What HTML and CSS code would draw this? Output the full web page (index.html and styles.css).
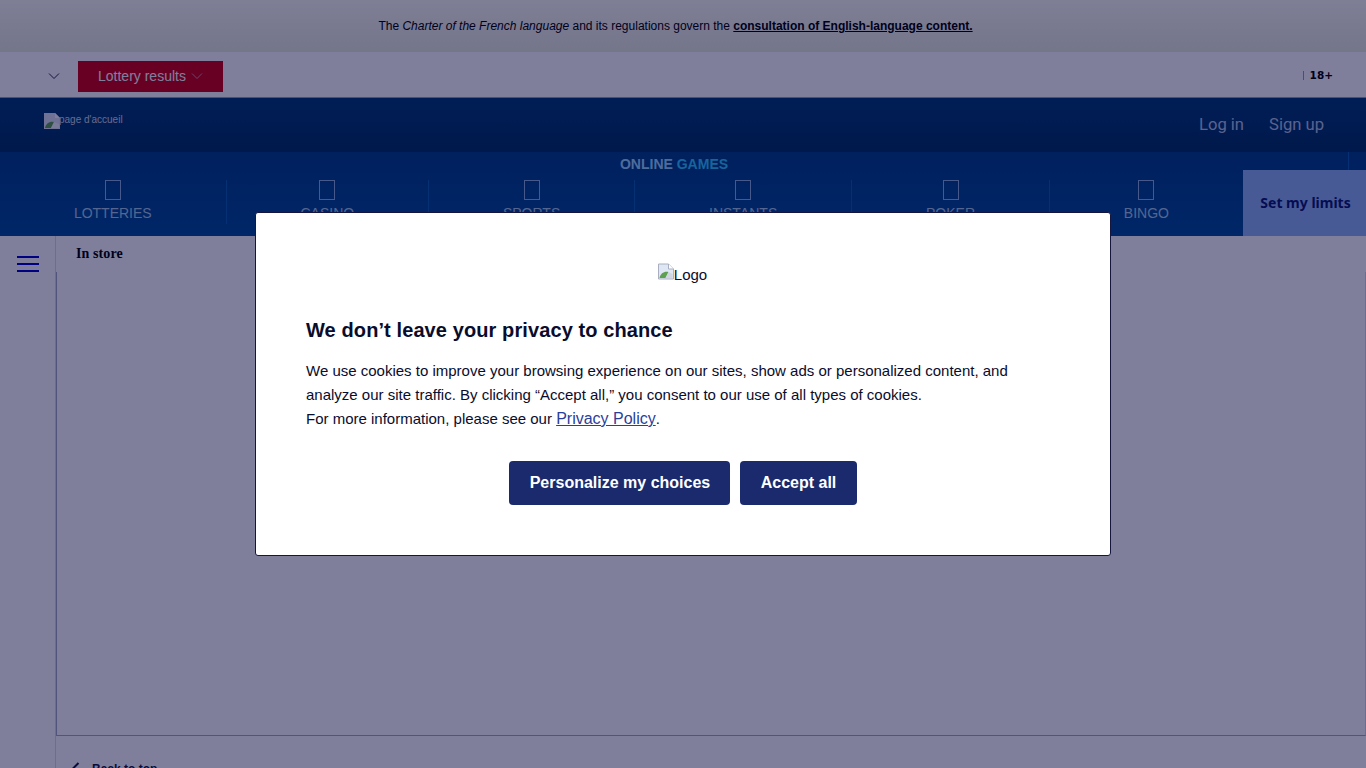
FILE: index.html
```html
<!DOCTYPE html>
<html lang="en">
<head>
    <meta charset="UTF-8">
    <meta name="viewport" content="width=device-width, initial-scale=1.0">
    <title>Lottery results</title>
    <link rel="stylesheet" href="styles.css">
</head>
<body>
    <div class="notice">
        <p>The <em>Charter of the French language</em> and its regulations govern the <a href="#">consultation of English-language content.</a></p>
    </div>

    <div class="utility">
        <svg class="chevron" width="12" height="8" viewBox="0 0 12 8"><path d="M1 1.5l5 5 5-5" fill="none" stroke="#24263f" stroke-width="1"/></svg>
        <a class="results-button" href="#">Lottery results
            <svg width="12" height="8" viewBox="0 0 12 8"><path d="M1 1.5l5 5 5-5" fill="none" stroke="#d68aa0" stroke-width="1"/></svg>
        </a>
        <div class="age"><span class="age-line"></span>18+</div>
    </div>

    <header class="topbar">
        <a class="home-link" href="#">
            <svg class="broken-image" width="16" height="16" viewBox="0 0 16 16"><path d="M0 0h11l5 5v11H0z" fill="#dfe4f2"/><path d="M11 0v5h5z" fill="#fff"/><path d="M1 15c1-5 5-7 9-6l-3 6z" fill="#5da04f"/><path d="M7 15l3-6 5 2v4z" fill="#f2f4f8"/></svg>
            <span>page d'accueil</span>
        </a>
        <nav class="account">
            <a href="#">Log in</a>
            <a href="#">Sign up</a>
        </nav>
    </header>

    <section class="games">
        <div class="games-title">ONLINE <span>GAMES</span></div>
        <span class="games-rule"></span>
        <div class="games-row">
            <a class="game" href="#"><i class="tofu"></i>LOTTERIES</a>
            <a class="game" href="#"><i class="tofu"></i>CASINO</a>
            <a class="game" href="#"><i class="tofu"></i>SPORTS</a>
            <a class="game" href="#"><i class="tofu"></i>INSTANTS</a>
            <a class="game" href="#"><i class="tofu"></i>POKER</a>
            <a class="game last" href="#"><i class="tofu"></i>BINGO</a>
            <a class="limits" href="#">Set my limits</a>
        </div>
    </section>

    <div class="page">
        <aside class="sidebar">
            <div class="burger"><span></span><span></span><span></span></div>
        </aside>
        <main class="content">
            <div class="tab">In store</div>
            <div class="frame"></div>
            <a class="back" href="#">
                <svg width="9" height="14" viewBox="0 0 9 14"><path d="M7.5 1L1.5 7l6 6" fill="none" stroke="#14163f" stroke-width="2"/></svg>
                Back to top
            </a>
        </main>
    </div>

    <div class="overlay">
        <div class="modal">
            <div class="modal-logo">
                <svg width="16" height="17" viewBox="0 0 16 16"><path d="M.5.5h10l5 5v10H.5z" fill="#dfe6f4" stroke="#a9afc0"/><path d="M10.5.5v5h5" fill="#fff" stroke="#a9afc0"/><path d="M1.5 14.5c1-5 5-7 9-6l-3 6z" fill="#5da04f"/><path d="M7.5 14.5l3-6 4 2v4z" fill="#cfd6e2"/></svg>
                <span>Logo</span>
            </div>
            <h2>We don’t leave your privacy to chance</h2>
            <p>We use cookies to improve your browsing experience on our sites, show ads or personalized content, and analyze our site traffic. By clicking “Accept all,” you consent to our use of all types of cookies.<br>For more information, please see our <a href="#">Privacy Policy</a>.</p>
            <div class="modal-buttons">
                <button>Personalize my choices</button>
                <button>Accept all</button>
            </div>
        </div>
    </div>
</body>
</html>
```

FILE: styles.css
```css
html, body {
    height: 100%;
}

body {
    margin: 0;
    height: 768px;
    overflow: hidden;
    font-family: "Liberation Sans", Arial, sans-serif;
    background: #fff;
    color: #000;
}

a {
    color: inherit;
    text-decoration: none;
}

.notice {
    height: 52px;
    display: flex;
    align-items: center;
    justify-content: center;
    padding-right: 15px;
    box-sizing: border-box;
    background: linear-gradient(to bottom, #fdfdf4, #e8ecdc);
    font-size: 12px;
}

.notice p {
    margin: 0;
}

.notice a {
    font-weight: bold;
    text-decoration: underline;
}

.utility {
    height: 46px;
    box-sizing: border-box;
    display: flex;
    align-items: center;
    padding: 3px 33px 0 48px;
    background: #fff;
    border-bottom: 1px solid #8aa0d0;
}

.results-button {
    margin-left: 18px;
    height: 31px;
    width: 145px;
    box-sizing: border-box;
    display: flex;
    align-items: center;
    gap: 5px;
    padding-left: 20px;
    background: #d00010;
    color: #fff;
    font-size: 14px;
}

.age {
    margin-left: auto;
    display: flex;
    align-items: center;
    gap: 6px;
    padding-bottom: 2px;
    font-family: "DejaVu Sans", sans-serif;
    font-size: 10.5px;
    font-weight: bold;
}

.age-line {
    width: 1px;
    height: 9px;
    background: #9a9aa8;
}

.topbar {
    height: 54px;
    display: flex;
    justify-content: space-between;
    background: linear-gradient(to bottom, #003c74, #003260);
    padding: 0 42px 0 44px;
}

.home-link {
    display: flex;
    align-items: flex-start;
    padding-top: 15px;
    font-size: 10px;
    color: #cfd6e2;
}

.home-link span {
    margin-left: -1px;
    padding-top: 1px;
}

.account {
    display: flex;
    align-items: center;
    gap: 25px;
    padding-bottom: 2px;
    font-family: Roboto, sans-serif;
    font-size: 16.6px;
    color: #b4c6e4;
}

.games {
    position: relative;
    height: 84px;
    background: linear-gradient(to bottom, #004084, #004e98);
}

.games-title {
    height: 28px;
    padding: 4px 0 0 0;
    box-sizing: border-box;
    margin-left: -18px;
    text-align: center;
    font-size: 14px;
    font-weight: bold;
    color: #9cd8ff;
}

.games-title span {
    color: #30c8ff;
}

.games-rule {
    position: absolute;
    top: 0;
    left: 1348px;
    height: 18px;
    width: 1px;
    background: #0a62b0;
}

.games-row {
    display: flex;
    height: 56px;
}

.game {
    padding: 0 73.9px;
    height: 44px;
    box-sizing: border-box;
    display: flex;
    flex-direction: column;
    align-items: center;
    border-right: 1px solid #0a62b0;
    color: #a8cce8;
    font-size: 14px;
    line-height: 16px;
}

.game.last {
    border-right: none;
}

.tofu {
    width: 16px;
    height: 20px;
    box-sizing: border-box;
    border: 1px solid #8fb0dc;
    margin-bottom: 5px;
}

.limits {
    margin-left: auto;
    margin-top: -10px;
    width: 123px;
    height: 66px;
    display: flex;
    align-items: center;
    justify-content: center;
    background: #8eb4f4;
    color: #0a1a6c;
    font-family: "Noto Sans", sans-serif;
    font-size: 14px;
    font-weight: bold;
    padding: 0 0 2px 2px;
    box-sizing: border-box;
}

.page {
    display: flex;
    height: 532px;
}

.sidebar {
    width: 56px;
    border-right: 1px solid #d8dbe6;
    padding: 20px 0 0 17px;
    box-sizing: border-box;
}

.burger span {
    display: block;
    width: 22px;
    height: 2px;
    margin-bottom: 5px;
    background: #0000cc;
}

.content {
    flex: 1;
}

.tab {
    height: 36px;
    padding: 10px 0 0 20px;
    box-sizing: border-box;
    font-family: "Liberation Serif", serif;
    font-size: 14px;
    font-weight: bold;
    letter-spacing: 0.1px;
}

.frame {
    height: 464px;
    box-sizing: border-box;
    border-left: 1px solid #a4a8bc;
    border-bottom: 1px solid #a4a8bc;
    border-right: 1px solid #d8dbe6;
}

.back {
    display: flex;
    align-items: center;
    gap: 12px;
    margin: 26px 0 0 15px;
    font-size: 12px;
    font-weight: bold;
    color: #14163f;
}

.overlay {
    position: fixed;
    top: 0;
    left: 0;
    right: 0;
    bottom: 0;
    background: rgba(0, 0, 56, 0.5);
    display: flex;
    justify-content: center;
    padding-top: 212px;
    box-sizing: border-box;
}

.modal {
    width: 856px;
    height: 344px;
    box-sizing: border-box;
    padding: 50px 50px 0;
    background: #fff;
    border: 1px solid #14163f;
    border-radius: 3px;
    color: #0a0c2c;
}

.modal-logo {
    height: 24px;
    display: flex;
    justify-content: center;
    margin-left: -1px;
    font-size: 15px;
    line-height: 24px;
}

.modal h2 {
    margin: 30px 0 0;
    font-size: 20px;
    line-height: 26px;
    letter-spacing: 0.1px;
}

.modal p {
    margin: 16px 0 0;
    font-size: 15px;
    line-height: 24px;
    width: 710px;
}

.modal p a {
    color: #2a3f9a;
    font-size: 16px;
    text-decoration: underline;
}

.modal-buttons {
    display: flex;
    justify-content: center;
    gap: 10px;
    margin: 30px 0 0;
}

.modal-buttons button {
    height: 44px;
    padding: 0 20.25px;
    border: none;
    border-radius: 4px;
    background: #1a2a6c;
    color: #fff;
    font-family: inherit;
    font-size: 16px;
    font-weight: bold;
}
```
